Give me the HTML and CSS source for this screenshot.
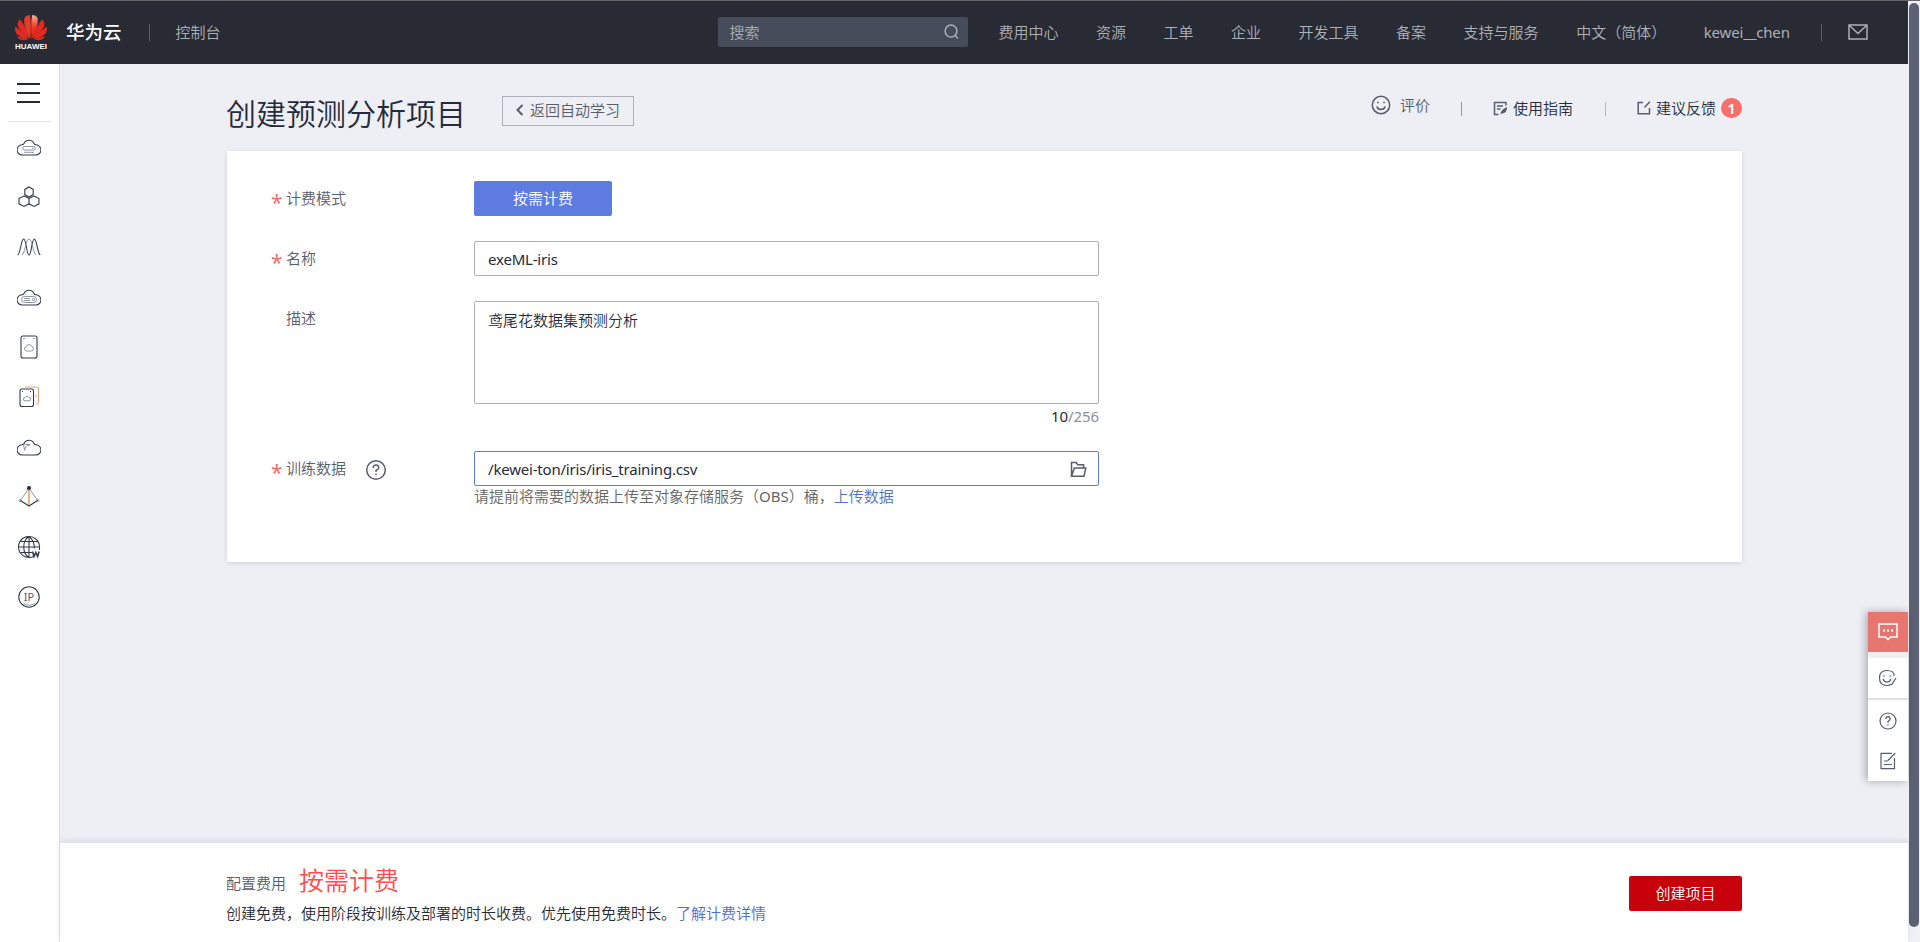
FILE: index.html
```html
<!DOCTYPE html>
<html lang="zh-CN">

<head>
    <meta charset="UTF-8">
    <meta name="viewport" content="width=device-width, initial-scale=1.0">
    <title>创建预测分析项目</title>
    <link rel="stylesheet" href="styles.css">
</head>

<body>
    <div class="app">
        <header class="topbar">
            <svg class="logo" width="32" height="35" viewBox="0 0 32 35">
                <defs>
                    <linearGradient id="petal" x1="0" y1="0" x2="0" y2="1">
                        <stop offset="0" stop-color="#f8b08a"/>
                        <stop offset="0.5" stop-color="#ee3a24"/>
                        <stop offset="1" stop-color="#d81e1a"/>
                    </linearGradient>
                </defs>
                <g fill="#e42a20">
                    <path fill="#ea3a28" d="M15.3 24C10.500 16 8.500 8 9.500 3C10.500 1 12.500 0 14.800 0C16 6 16 15 15.300 24Z"/>
                    <path fill="url(#petal)" d="M16.700 24C21.500 16 23.500 8 22.500 3C21.500 1 19.500 0 17.200 0C16 6 16 15 16.700 24Z"/>
                    <path d="M14.300 24C12 15 8 8 5 4.500C3 6 2 8.500 3 11C5 16 10 20.500 14.300 24Z"/>
                    <path d="M17.700 24C20 15 24 8 27 4.500C29 6 30 8.500 29 11C27 16 22 20.500 17.700 24Z"/>
                    <path d="M13.300 24.200C9 18 4 14 .5 11.500C-.5 14 .2 17.500 2.500 19.500C5 21.800 9 23.500 13.300 24.200Z"/>
                    <path d="M18.700 24.200C23 18 28 14 31.500 11.500C32.500 14 31.800 17.500 29.500 19.500C27 21.800 23 23.500 18.700 24.200Z"/>
                    <path d="M12.500 24.600C8.500 23 5 22 2 21.300C3.500 24.800 8 26 12.500 24.600Z"/>
                    <path d="M19.500 24.600C23.500 23 27 22 30 21.300C28.500 24.800 24 26 19.500 24.600Z"/>
                </g>
                <text x="0" y="34.300" class="logo-text" textLength="32" lengthAdjust="spacingAndGlyphs">HUAWEI</text>
            </svg>
            <span class="brand">华为云</span>
            <i class="bar"></i>
            <a class="console">控制台</a>
            <div class="search">
                <span>搜索</span>
                <svg width="16" height="16" viewBox="0 0 16 16"><circle cx="7" cy="7" r="5.900"/><path d="M10.800 11l3 3.500"/></svg>
            </div>
            <nav class="top-nav">
                <a>费用中心</a>
                <a>资源</a>
                <a>工单</a>
                <a>企业</a>
                <a>开发工具</a>
                <a>备案</a>
                <a>支持与服务</a>
                <a>中文（简体）</a>
                <a class="user">kewei__chen</a>
            </nav>
            <i class="bar bar-user"></i>
            <svg class="mail" width="20" height="16" viewBox="0 0 20 16"><path d="M1 1h18v14H1zM2 2l8 7.500L18 2"/></svg>
        </header>

        <div class="body">
            <!-- 左侧服务图标 -->
            <aside class="sidebar">
                <div class="menu"><i></i><i></i><i></i></div>
                <ul class="services">
                    <li><svg viewBox="0 0 24 24"><path d="M5.500 20a5 5 0 0 1-.6-10.200c.9 0 1.700-.4 2.100-1.200a5.400 5.400 0 0 1 10 0c.4.800 1.200 1.200 2.100 1.200a5 5 0 0 1-.6 10.200z"/><rect class="thin" x="6" y="11.500" width="12" height="3.500" rx="1"/><path class="thin" d="M7 17.300h10M15 13.200h1.500"/></svg></li>
                    <li><svg viewBox="0 0 24 24"><path d="M12 2l4.200 2.400v5.200L12 12 7.800 9.600V4.400zM7 11l5 2.600v5.200L7 21.400l-5-2.600v-5.200zM17 11l5 2.600v5.200l-5 2.600-5-2.600v-5.200z"/></svg></li>
                    <li><svg viewBox="0 0 24 24"><path d="M.8 20C4 17 4 4 6.700 4S9.500 20 12 20s2.700-16 5.300-16S20 17 23.200 20"/><path class="thin" d="M5 20c3-1 3.500-16 7-16s4 15 7 16"/></svg></li>
                    <li><svg viewBox="0 0 24 24"><path d="M5.500 20a5 5 0 0 1-.6-10.200c.9 0 1.700-.4 2.100-1.200a5.400 5.400 0 0 1 10 0c.4.800 1.200 1.200 2.100 1.200a5 5 0 0 1-.6 10.200z"/><rect class="thin" x="4.500" y="11.500" width="15" height="6" rx="3"/><path class="thin" d="M7 13.500h6M7 15.500h6"/><circle class="thin" cx="16.500" cy="14.500" r="1.200"/></svg></li>
                    <li><svg viewBox="0 0 24 24"><rect x="4" y="1" width="16" height="22" rx="2"/><path d="M6.500 3.500h1M16.500 3.500h1"/><path class="thin" d="M9.500 16a2.300 2.300 0 0 1-.3-4.500 3 3 0 0 1 5.600 0 2.300 2.300 0 0 1-.3 4.500z"/></svg></li>
                    <li><svg viewBox="0 0 24 24"><rect x="3" y="4" width="13.500" height="17.500" rx="2"/><path class="thin" d="M8 15.800a1.600 1.600 0 0 1 0-3.200 2.200 2.200 0 0 1 4 0 1.600 1.600 0 0 1 0 3.200z"/><path d="M5 6.500h1M13 6.500h1"/><path class="orange" d="M8 2h11.500q2 0 2 2v13.500q0 2-2 2M18 9.500l1.500 1.500-1.500 1.500"/></svg></li>
                    <li><svg viewBox="0 0 24 24"><path d="M5.500 20a5 5 0 0 1-.6-10.200c.9 0 1.700-.4 2.100-1.200a5.400 5.400 0 0 1 10 0c.4.800 1.200 1.200 2.100 1.200a5 5 0 0 1-.6 10.200z"/><path class="thin" d="M6.500 9l6.500.8-4 1.500-1.500 4z"/></svg></li>
                    <li><svg viewBox="0 0 24 24"><path class="thin" d="M12 3L3.500 15.500M12 3l8.500 12.500"/><path d="M3.500 15.500L12 21l8.500-5.500"/><path class="amber" d="M12 4v16"/><circle class="solid" cx="12" cy="3" r="1.500"/><circle class="thin" cx="3" cy="15.500" r="1"/><circle class="thin" cx="21" cy="15.500" r="1"/></svg></li>
                    <li><svg viewBox="0 0 24 24"><path d="M17 21.200A10.500 10.500 0 1 1 22.500 12v3M12 1.500v21M1.500 12h21M3.500 6.500h17M3.500 17.500H15M12 1.500c-7 4-7 17 0 21M12 1.500c4 3 5.500 7 5.300 12"/><path class="w" d="M15.500 16.500l1.500 5 1.800-4 1.800 4 1.500-5"/></svg></li>
                    <li><svg viewBox="0 0 24 24"><circle cx="12" cy="12" r="10.200"/><path class="thin" d="M6.500 18.500q5.500 3.500 11 0"/><text x="12" y="16" text-anchor="middle">IP</text></svg></li>
                </ul>
            </aside>

            <main class="main">
                <div class="content">
                    <div class="page-head">
                        <h1>创建预测分析项目</h1>
                        <a class="back"><svg width="9" height="12" viewBox="0 0 9 12"><path d="M7.500 1L2.500 6l5 5"/></svg>返回自动学习</a>
                        <div class="head-links">
                            <a class="rate"><svg width="20" height="20" viewBox="0 0 20 20"><circle cx="10" cy="10" r="8.700"/><path d="M5.800 11.500q1 3 4.200 3t4.200-3M6.200 7.500h1.600M12.200 7.500h1.600"/></svg>评价</a>
                            <i class="split split-cyan"></i>
                            <a class="guide"><svg width="15" height="15" viewBox="0 0 15 15"><path d="M5.500 13.500h-4V1.500h11.500v3M4 5h6M4 8h3.500"/><path class="pen" d="M7.500 13.500q0-5 6.500-7.500 0 6.500-5 6.500z"/></svg>使用指南</a>
                            <i class="split"></i>
                            <a class="advise"><svg width="14" height="14" viewBox="0 0 14 14"><path d="M6 1.500H1.200v11.300h11.300V7M7.500 6.500L12.800.8"/></svg>建议反馈<em class="badge">1</em></a>
                        </div>
                    </div>

                    <form class="card">
                        <div class="row">
                            <label class="required">计费模式</label>
                            <div class="mode">按需计费</div>
                        </div>
                        <div class="row">
                            <label class="required">名称</label>
                            <div class="input">exeML-iris</div>
                        </div>
                        <div class="row">
                            <label>描述</label>
                            <div class="field">
                                <div class="input textarea">鸢尾花数据集预测分析</div>
                                <p class="count"><b>10</b>/256</p>
                            </div>
                        </div>
                        <div class="row">
                            <label class="required">训练数据<svg class="help" width="22" height="22" viewBox="0 0 22 22"><circle cx="11" cy="11" r="9.300"/><path d="M8.200 9q0-2.900 2.800-2.900T13.800 8.800Q13.800 10.300 11 11.500V13M11 14.500v1.700"/></svg></label>
                            <div class="field">
                                <div class="input focus">/kewei-ton/iris/iris_training.csv<svg width="17" height="17" viewBox="0 0 17 17"><path d="M1.500 15.200V1.500h4.700l1.500 2.200h5.800V7M1.500 15.200L4.300 7h11.500l-1.800 8.200z"/></svg></div>
                                <p class="hint">请提前将需要的数据上传至对象存储服务（<span>OBS</span>）桶，<a>上传数据</a></p>
                            </div>
                        </div>
                    </form>
                </div>

                <footer class="footer">
                    <div class="fee">
                        <p class="fee-mode">配置费用<strong>按需计费</strong></p>
                        <p class="fee-desc">创建免费，使用阶段按训练及部署的时长收费。优先使用免费时长。<a>了解计费详情</a></p>
                    </div>
                    <button class="submit">创建项目</button>
                </footer>
            </main>
        </div>

        <!-- 右侧悬浮工具 -->
        <div class="float-tools">
            <a class="chat"><svg width="20" height="18" viewBox="0 0 20 18"><path d="M1 1h18v13h-6.500L10 16.500 7.500 14H1z"/><path class="dots" d="M5 7.500h2M9 7.500h2M13 7.500h2"/></svg></a>
            <div class="tools">
                <a class="tool"><svg width="20" height="18" viewBox="0 0 20 18"><path d="M13 15.200Q11.500 16.500 9 16.500 1.500 16.500 1.500 9T9 1.500 16 7M5 10q1 3 4 3t4-3M5 7h1.800M11.500 7h1.800M13.500 15.800L18 9"/></svg></a>
                <a class="tool"><svg width="18" height="18" viewBox="0 0 18 18"><circle cx="9" cy="9" r="8"/><path d="M6.800 7q0-2.300 2.200-2.300T11.200 7Q11.200 8 9 9.500V11M9 12.200v1.300"/></svg></a>
                <a class="tool"><svg width="16" height="18" viewBox="0 0 16 18"><path d="M12 1.300H1v15.400h13.500V6M8 8.500L15.200 1M4 9h4M4 12.500h8"/></svg></a>
            </div>
        </div>
    </div>
    <div class="scroll"><i></i></div>
</body>

</html>
```
FILE: styles.css
```css
/* 全局样式 */
* {
    box-sizing: border-box;
}

body {
    margin: 0;
    height: 942px;
    display: flex;
    overflow: hidden;
    border-top: 1px solid #66666a;
    background: #eeeff5;
    color: #252b3a;
    font: 350 15px/20px "Noto Sans", "Noto Sans CJK SC", sans-serif;
}

h1,
p,
ul {
    margin: 0;
    padding: 0;
    font-weight: inherit;
}

svg {
    display: block;
    flex: none;
    fill: none;
    stroke: currentColor;
    stroke-width: 1.5;
}

.app {
    width: 1908px;
    display: flex;
    flex-direction: column;
    position: relative;
}

/* 顶部导航 */
.topbar {
    height: 63px;
    display: flex;
    align-items: center;
    padding: 0 40px 1px 15px;
    background: #282b33;
    color: #adb0b8;
}

.logo {
    stroke: none;
}

.logo-text {
    fill: #fff;
    font: bold 8px "Liberation Sans", sans-serif;
}

.brand {
    margin-left: 19px;
    color: #fff;
    font-size: 18.5px;
    font-weight: 500;
}

.bar {
    width: 1px;
    height: 17px;
    margin-left: 27px;
    background: #575d6c;
}

.console {
    margin-left: 26px;
    width: 45px;
}

.search {
    width: 250px;
    height: 30px;
    margin-left: 497px;
    padding: 0 8px 0 12px;
    display: flex;
    align-items: center;
    justify-content: space-between;
    border-radius: 2px;
    background: #464c59;
}

.top-nav {
    display: flex;
    gap: 37.5px;
    margin-left: 31px;
    white-space: nowrap;
}

.user {
    font-weight: 400;
    letter-spacing: -.15px;
}

.bar-user {
    margin-left: auto;
    margin-right: 26px;
}

/* 左侧栏 */
.body {
    flex: 1;
    display: flex;
}

.sidebar {
    width: 60px;
    padding-top: 19px;
    border-right: 1px solid #dfe1e6;
    background: #fff;
}

.menu {
    display: flex;
    flex-direction: column;
    gap: 7px;
    width: 43px;
    height: 39px;
    margin-left: 8px;
    padding-left: 9px;
    border-bottom: 1px solid #dfe1e6;
}

.menu i {
    width: 23px;
    height: 2px;
    background: #252b3a;
}

.services {
    width: 58px;
    list-style: none;
}

.services li {
    height: 50px;
    display: flex;
    align-items: center;
    justify-content: center;
}

.services svg {
    width: 24px;
    height: 24px;
    stroke: #343b50;
    stroke-width: 1.1;
}

.services .thin {
    stroke: #737b8c;
    stroke-width: .8;
}

.services .orange {
    stroke: #dc9568;
    stroke-width: .9;
}

.services .amber {
    stroke: #d8892a;
    stroke-width: 1.2;
}

.services .solid {
    fill: #252b3a;
}

.services .w {
    stroke-width: 1.6;
}

.services text {
    stroke: none;
    fill: #575d6c;
    font-size: 11px;
    font-weight: 400;
}

/* 主内容区 */
.main {
    flex: 1;
    display: flex;
    flex-direction: column;
}

.content {
    flex: 1;
    padding: 0 166px 0 167px;
}

.page-head {
    height: 87px;
    display: flex;
    align-items: flex-start;
}

.page-head h1 {
    margin: 30px 0 0 -1px;
    width: 241px;
    font-size: 30px;
    line-height: 40px;
    white-space: nowrap;
}

.back {
    width: 132px;
    height: 30px;
    margin: 32px 0 0 35px;
    padding: 0 0 2px 12px;
    display: flex;
    align-items: center;
    gap: 6px;
    border: 1px solid #adb0b8;
    color: #575d6c;
}

.back svg {
    stroke-width: 2;
}

.head-links {
    display: flex;
    align-items: center;
    margin: 34px 0 0 auto;
}

.head-links a {
    display: flex;
    align-items: center;
    gap: 5px;
}

.head-links svg {
    color: #575d6c;
}

.head-links .rate {
    gap: 9px;
    margin-top: -7px;
    color: #575d6c;
}

.rate svg {
    margin-top: 1px;
}

.head-links .pen {
    fill: #575d6c;
    stroke: none;
}

.split {
    width: 1px;
    height: 14px;
    margin: 2px 31px 0 32px;
    background: #a5b5f3;
}

.split-cyan {
    margin-left: 31px;
    background: #3eb0f5;
}

.badge {
    width: 21px;
    height: 20px;
    border-radius: 10px;
    background: #f66f6a;
    color: #fff;
    text-align: center;
    font-style: normal;
    font-weight: 600;
}

/* 表单 */
.card {
    height: 411px;
    padding: 30px 44px;
    background: #fff;
    box-shadow: 0 1px 4px rgba(37, 43, 58, .15);
}

.row {
    display: flex;
    margin-bottom: 25px;
}

.row label {
    width: 203px;
    height: 35px;
    padding: 0 0 2px 15px;
    display: flex;
    align-items: center;
    color: #575d6c;
}

.row label.required {
    padding-left: 0;
}

.required::before {
    content: "*";
    width: 15px;
    height: 17px;
    color: #f66f6a;
    font-size: 21px;
    font-weight: 400;
    line-height: 26px;
}

.help {
    margin: 4px 0 0 19px;
}

.mode {
    width: 138px;
    height: 35px;
    border-radius: 2px;
    background: #5e7ce0;
    color: #fff;
    line-height: 34px;
    text-align: center;
}

.input {
    width: 625px;
    height: 35px;
    padding: 0 11px 0 13px;
    display: flex;
    align-items: center;
    justify-content: space-between;
    border: 1px solid #adb0b8;
    border-radius: 2px;
    font-weight: 400;
    letter-spacing: -.2px;
}

.textarea {
    height: 103px;
    padding-top: 8px;
    align-items: flex-start;
    font-weight: 350;
    letter-spacing: 0;
}

.focus {
    border-color: #5e7ce0;
}

.focus svg {
    margin-top: 1px;
    color: #575d6c;
}

.count {
    padding-top: 2px;
    line-height: 20px;
    text-align: right;
    color: #8a8e99;
    font-weight: 400;
    letter-spacing: -.1px;
}

.count b {
    color: #252b3a;
    font-weight: 400;
}

.hint {
    color: #666;
}

.hint span {
    font-weight: 400;
}

.hint a,
.fee-desc a {
    color: #526ecc;
}

/* 底部操作栏 */
.footer {
    height: 99px;
    padding: 0 166px;
    display: flex;
    justify-content: space-between;
    background: #fff;
    box-shadow: 0 -2px 6px rgba(37, 43, 58, .1);
}

.fee {
    padding-top: 22px;
}

.fee-mode {
    display: flex;
    align-items: center;
    height: 30px;
    padding-top: 5px;
    color: #575d6c;
}

.fee-mode strong {
    margin: -5px 0 0 13px;
    color: #ff4c4c;
    font-size: 25px;
    font-weight: inherit;
}

.fee-desc {
    margin-top: 8px;
}

.submit {
    width: 113px;
    height: 35px;
    margin-top: 33px;
    padding: 0 0 1px;
    border: 0;
    border-radius: 2px;
    background: #c7000b;
    color: #fff;
    font: inherit;
}

/* 悬浮工具 */
.float-tools {
    position: absolute;
    top: 611px;
    right: 0;
    width: 40px;
    display: flex;
    flex-direction: column;
    gap: 6px;
    background: #f0f0f2;
    box-shadow: -2px 0 8px rgba(0, 0, 0, .3);
}

.chat {
    height: 40px;
    display: flex;
    align-items: center;
    justify-content: center;
    background: #e6766f;
    color: #fff;
}

.dots {
    stroke-width: 2;
}

.tools {
    background: #fff;
}

.tool {
    height: 41px;
    display: flex;
    align-items: center;
    justify-content: center;
    color: #575d6c;
}

.tool svg {
    stroke-width: 1.2;
}

.tool:first-child {
    height: 42px;
    border-bottom: 2px solid #dfe1e6;
}

.tool:last-child {
    height: 40px;
}

/* 滚动条 */
.scroll {
    width: 12px;
    padding: 2px 1px 15px;
    background: #f0f1f6;
}

.scroll i {
    display: block;
    height: 100%;
    border-radius: 5px;
    background: #5c6173;
}
```
